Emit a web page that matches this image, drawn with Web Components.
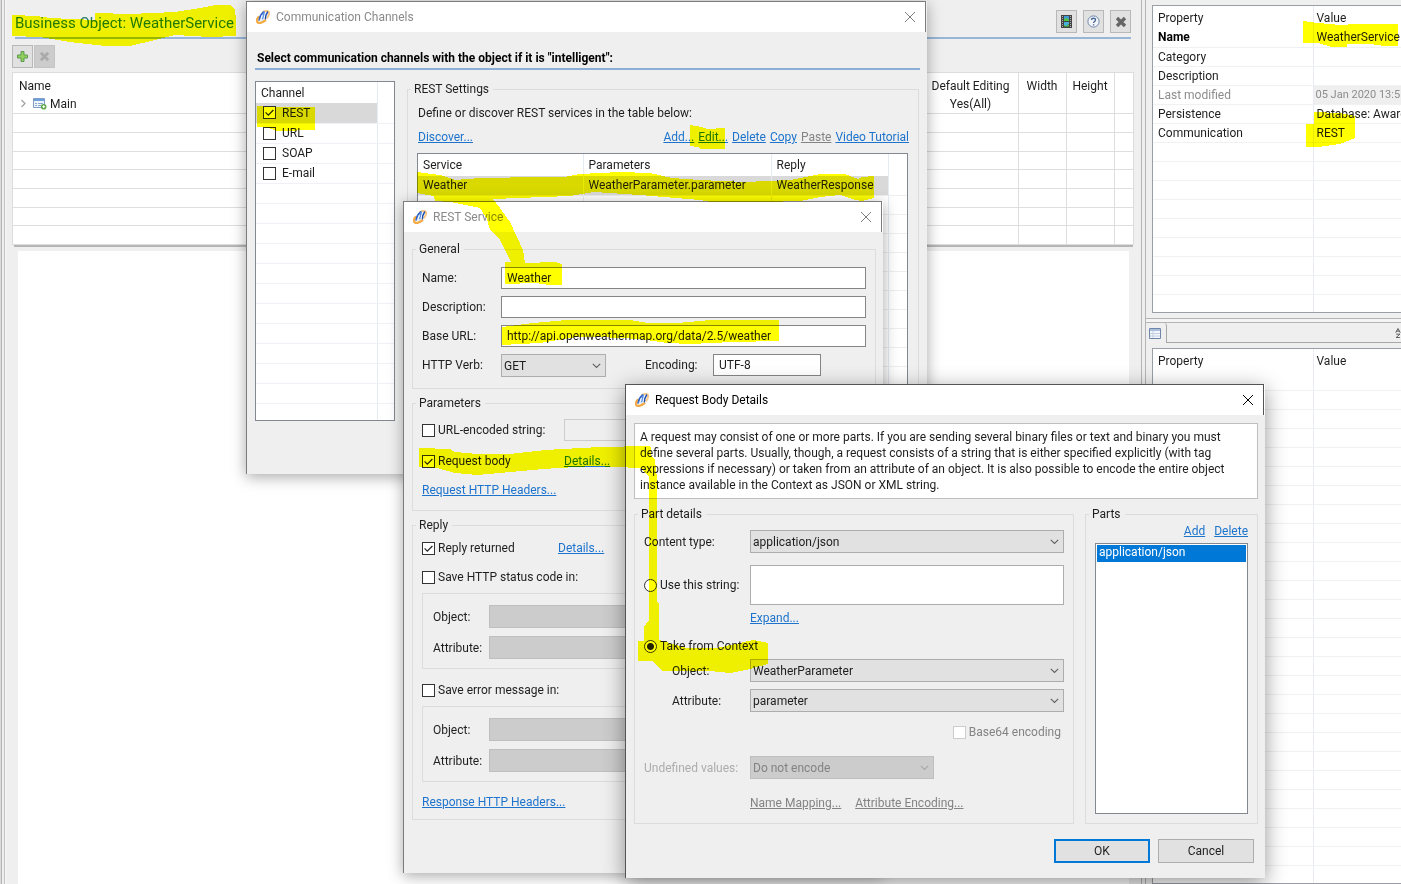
<!DOCTYPE html>
<html lang="en">
<head>
<meta charset="utf-8">
<title>Business Object: WeatherService</title>
<style>
  html, body { margin: 0; height: 100%; }
  body { font: 12px/16px Roboto, "Noto Sans", sans-serif; color: #1e1e1e; background: #efefef; overflow: hidden; }
</style>
</head>
<body>
<studio-desktop></studio-desktop>
<script>
const CHEVRON = `url("data:image/svg+xml,%3Csvg xmlns='http://www.w3.org/2000/svg' width='9' height='6'%3E%3Cpath d='M.8.8 4.5 4.5 8.2.8' fill='none' stroke='%23606060' stroke-width='1.1'/%3E%3C/svg%3E")`;
const CHEVRON_OFF = CHEVRON.replace('%23606060', '%23a8a8a8');
const TICK = `url("data:image/svg+xml,%3Csvg xmlns='http://www.w3.org/2000/svg' width='11' height='11'%3E%3Cpath d='M1.6 5.4 4.3 8.1 9.4 3' fill='none' stroke='%23222' stroke-width='1.2'/%3E%3C/svg%3E")`;

const BASE = `
  * { box-sizing: border-box; }
  :host { display: block; box-sizing: border-box; }
  a { color: #1e74cc; text-decoration: underline; }
  a.off { color: #838383; }
  input, select, textarea, button { font: inherit; color: inherit; margin: 0; border-radius: 0; }
  input[type=text], textarea { display: block; width: 100%; min-width: 0; height: 22px; padding: 0 5px; border: 1px solid #858585; background: #fff; outline: 0; resize: none; }
  input[type=text]:disabled { border-color: #ccc; background: #efefef; }
  select { display: block; appearance: none; width: 100%; min-width: 0; height: 23px; padding: 0 22px 0 2px; border: 1px solid #adadad;
    background: #e1e1e1 ${CHEVRON} no-repeat right 4px center; }
  select:disabled { background: #ccc ${CHEVRON_OFF} no-repeat right 4px center; border-color: #bfbfbf; color: #838383; opacity: 1; }
  input[type=checkbox], input[type=radio] { appearance: none; flex: none; width: 13px; height: 13px; border: 1px solid #333; background: #fff; }
  input[type=checkbox]:checked { background: #fff ${TICK} no-repeat center; }
  input[type=checkbox]:disabled { border-color: #ccc; }
  input[type=radio] { border-radius: 50%; }
  input[type=radio]:checked { background: radial-gradient(circle, #222 3px, #fff 4px); }
  .check { display: flex; align-items: center; gap: 3px; height: 20px; }
  table { border-collapse: collapse; table-layout: fixed; width: 100%; }
  th, td { font-weight: 400; text-align: left; padding: 0 5px; white-space: nowrap; overflow: hidden; }
`;

const define = (name, css, html) => customElements.define(name, class extends HTMLElement {
  constructor() {
    super();
    const t = document.createElement('template');
    t.innerHTML = `<style>${BASE}${css}</style>${typeof html === 'function' ? html(this) : html}`;
    this.attachShadow({ mode: 'open' }).append(t.content.cloneNode(true));
  }
});

const blankRows = (count, cells) => `<tr>${'<td></td>'.repeat(cells)}</tr>`.repeat(count);

/* Application mark used in every title bar */
define('app-mark', `:host { width: 14px; height: 14px; flex: none; } svg { display: block; }`, `
  <svg width="14" height="14" viewBox="0 0 14 14" fill="none" stroke-linecap="round" aria-hidden="true">
    <path d="M2.600 7C1 9 .6 11.300 1.700 12.400c1.600 1.200 5 .3 7.500-2" stroke="#f2ab45" stroke-width="2.400"/>
    <path d="M7 2C9.300.6 12 .6 12.800 1.800c.6 1.200 0 3.800-1.500 5.800" stroke="#f8c98a" stroke-width="2"/>
    <path d="M3.200 10.200C3.600 7 5 4 7.800 2" stroke="#2f62c4" stroke-width="1.700"/>
    <path d="M8.200 2.200 6.400 9.600" stroke="#5d93e6" stroke-width="1.600"/>
    <path d="M9.400 8.800C9.400 6.400 10.200 4 11.600 2" stroke="#1f4fae" stroke-width="1.500"/>
    <path d="M4 10.400 6.600 9.600M6 5.600v1.600" stroke="#e3edfb" stroke-width="1.100"/>
  </svg>`);

/* Window frame: title bar plus slotted body */
define('app-window', `
  :host { display: flex; flex-direction: column; color: #1e1e1e; box-shadow: 0 3px 14px rgba(0,0,0,.34); }
  :host([active]) { box-shadow: 0 5px 20px rgba(0,0,0,.42); }
  header { display: flex; align-items: center; gap: 6px; height: 31px; padding: 0 9px; margin-right: 1px;
    background: #fff; border: 1px solid #7c7c7c; border-bottom: 0; color: #8a8a8a; }
  :host([active]) header { color: #000; border-color: #555; }
  h2 { flex: 1; margin: 0; font: inherit; }
  button { width: 12px; height: 12px; padding: 0; border: 0; background: none; color: #7c7c7c; }
  :host([active]) button { color: #000; }
  svg { display: block; }
  .body { flex: 1; background: #efefef; border-left: 1px solid #7c7c7c; }
  :host([active]) .body { border-color: #555; }`,
  el => `<header><app-mark></app-mark><h2>${el.getAttribute('heading')}</h2>
    <button type="button" aria-label="Close"><svg width="12" height="12" viewBox="0 0 12 12"><path d="M1 1 11 11M11 1 1 11" stroke="currentColor" stroke-width="1"/></svg></button>
  </header><div class="body"><slot></slot></div>`);

/* Titled frame */
define('group-box', `
  fieldset { margin: 0; padding: 0 9px; min-width: 0; height: 100%; border: 1px solid #dcdcdc; }
  legend { padding: 0 4px 0 3px; margin-left: -6px; height: 16px; }`,
  el => `<fieldset>${el.hasAttribute('heading') ? `<legend>${el.getAttribute('heading')}</legend>` : ''}<slot></slot></fieldset>`);

define('tool-button', `
  :host { width: 21px; height: 23px; }
  button { display: grid; place-items: center; width: 100%; height: 100%; padding: 0; border: 1px solid #b8b8b8; background: #e1e1e1; }
  button:disabled { background: #ccc; border-color: #c4c4c4; }`,
  el => `<button type="button" aria-label="${el.getAttribute('label')}" ${el.hasAttribute('disabled') ? 'disabled' : ''}><slot></slot></button>`);

define('object-editor', `
  :host { display: flex; flex-direction: column; min-width: 0; background: #efefef; border-right: 1px solid #b4b4b4; }
  header { display: flex; align-items: center; justify-content: space-between; height: 37px; margin: 0 10px 0 8px; padding-top: 6px; }
  h1 { margin: 0; padding-top: 2px; font-size: 15px; font-weight: 400; line-height: 20px; color: #237a70; }
  .tools { display: flex; gap: 6px; }
  .rule { height: 2px; margin: 0 10px 0 8px; background: #97b6d8; }
  .bar { display: flex; gap: 1px; padding: 6px 0 4px 5px; }
  .list { height: 173px; margin: 0 7px 0 5px; background: #fff; border: 1px solid #dcdcdc; border-bottom: 0; }
  table { height: 100%; }
  td { border-bottom: 1px solid #dedede; }
  thead tr, .main { height: 19px; }
  tbody tr { height: 18px; }
  th { padding-top: 5px; }
  th:first-child { padding-left: 6px; }
  .c { text-align: center; border-left: 1px solid transparent; }
  .v { border-left: 1px solid #dedede; }
  .tree { display: flex; align-items: center; gap: 3px; }
  .split { height: 2px; margin: 0 8px 0 7px; background: #b6b6b6; }
  .canvas { flex: 1; margin: 4px 12px 0 11px; background: #fff; }
  svg { display: block; }`, `
  <header><h1>Business Object: WeatherService</h1>
    <div class="tools">
      <tool-button label="Video"><svg width="11" height="13" viewBox="0 0 11 13"><path d="M0 0h11v13H0z" fill="#444"/><path d="M3 1h5v5H3z" fill="#3f9ad8"/><path d="M3 4l3-1 2 2v1H3zM3 9l2-1 3 2v2H3z" fill="#50c83c"/><path d="M3 7h5v2l-3 2-2-1z" fill="#48b0dc"/><path d="M3 6.500h5M3 12h5" stroke="#444"/><path d="M1.500 1v12M9.500 1v12" stroke="#aaa" stroke-dasharray="1 1"/></svg></tool-button>
      <tool-button label="Help"><svg width="13" height="13" viewBox="0 0 13 13" fill="none"><circle cx="6.500" cy="6.500" r="5.600" fill="#f2f6fb" stroke="#6f86a8"/><path d="M4.500 5c.1-2.400 4-2.400 4 0 0 1.500-1.900 1.500-1.900 3M6.600 9.300v1.200" stroke="#4a6794" stroke-width="1.400"/></svg></tool-button>
      <tool-button label="Close"><svg width="12" height="12" viewBox="0 0 12 12"><path d="M2 2 10 10M10 2 2 10" stroke="#666" stroke-width="3.400"/></svg></tool-button>
    </div>
  </header>
  <div class="rule"></div>
  <div class="bar">
    <tool-button label="Add"><svg width="11" height="11" viewBox="0 0 11 11"><path d="M4 .5h3V4h3.500v3H7v3.500H4V7H.5V4H4z" fill="#8ed05a" stroke="#5f9a50"/></svg></tool-button>
    <tool-button label="Remove" disabled><svg width="11" height="11" viewBox="0 0 12 12"><path d="M2 2 10 10M10 2 2 10" stroke="#aaa" stroke-width="3.200"/></svg></tool-button>
  </div>
  <div class="list"><table>
    <colgroup><col><col style="width:95px"><col style="width:48px"><col style="width:48px"><col style="width:19px"></colgroup>
    <thead><tr><th>Name</th><th class="c">Default Editing</th><th class="c v">Width</th><th class="c v">Height</th><th class="v"></th></tr></thead>
    <tbody>
      <tr class="main"><td><span class="tree">
        <svg width="12" height="9" viewBox="0 0 12 9"><path d="M3.500 1 7 4.500 3.500 8" fill="none" stroke="#a0a0a0" stroke-width="1.200"/></svg>
        <svg width="14" height="12" viewBox="0 0 14 12"><path d="M.5.5h11v9H.5z" fill="#eef5fd" stroke="#7d9cc6"/><path d="M1 1h10v2H1z" fill="#6f9fdc"/><path d="M2 5.500h2M5 5.500h5M2 7.500h2M5 7.500h3" stroke="#8ba7cb"/><circle cx="10.700" cy="8.700" r="2.800" fill="#5da648"/><path d="M9.200 8.700h3M10.700 7.200v3" stroke="#fff"/></svg>Main</span></td>
        <td class="c">Yes(All)</td><td class="v"></td><td class="v"></td><td class="v"></td></tr>
      ${'<tr><td></td><td></td><td class="v"></td><td class="v"></td><td class="v"></td></tr>'.repeat(7)}
    </tbody></table></div>
  <div class="split"></div>
  <div class="canvas"></div>`);

define('property-table', `
  :host { background: #fff; border: 1px solid #9a9ea6; border-right: 0; overflow: hidden; }
  tr { height: 19px; }
  th, td { border-bottom: 1px solid #f0f1f3; line-height: 18px; }
  thead th { border-bottom: 0; height: 22px; padding-top: 2px; }
  th + th, td + td { border-left: 1px solid #e8ecf2; padding: 0 0 0 3px; }
  th + th { padding-top: 2px; }
  .b { font-weight: 700; color: #000; }
  .dim { color: #8c8c8c; }
  .dim + td { background: #efefef; color: #8c8c8c; padding-left: 2px; font-size: 11px; }`,
  el => `<table><colgroup><col style="width:160px"><col></colgroup>
    <thead><tr><th>Property</th><th>Value</th></tr></thead><tbody>${el.hasAttribute('filled') ? `
      <tr><td class="b">Name</td><td>WeatherService</td></tr>
      <tr><td>Category</td><td></td></tr>
      <tr><td>Description</td><td></td></tr>
      <tr><td class="dim">Last modified</td><td>05 Jan 2020 13:5</td></tr>
      <tr><td>Persistence</td><td>Database: Aware</td></tr>
      <tr><td>Communication</td><td>REST</td></tr>` : ''}${blankRows(el.hasAttribute('filled') ? 9 : 40, 2)}</tbody></table>`);

define('property-pane', `
  :host { display: flex; flex-direction: column; margin-left: 3px; border-left: 1px solid #b4b4b4; background: #efefef; overflow: hidden; }
  property-table { margin-left: 6px; }
  .top { height: 308px; margin-top: 5px; flex: none; }
  .line { flex: none; margin-top: 5px; border-top: 1px solid #b4b4b4; height: 4px; background: #f4f4f4; }
  .tabs { flex: none; display: flex; height: 21px; border-top: 1px solid #b4b4b4; }
  .tab { display: grid; place-items: center; width: 21px; border-right: 1px solid #a8a8a8; border-radius: 0 3px 0 0; padding-right: 2px; }
  .strip { flex: 1; display: flex; justify-content: flex-end; align-items: center; border-bottom: 1px solid #a8a8a8; overflow: hidden; }
  .bottom { flex: 1; margin-top: 5px; min-height: 0; }
  svg { display: block; flex: none; }`, `
  <property-table class="top" filled></property-table>
  <div class="line"></div>
  <div class="tabs"><div class="tab"><svg width="12" height="11" viewBox="0 0 12 11"><path d="M.5.5h11v10H.5z" fill="#f3f7fc" stroke="#6f86a8"/><path d="M1 1h10v2H1z" fill="#a9bfdc"/><path d="M1 5.500h10M1 8h10M4 3v7" stroke="#c3d0e2"/></svg></div>
    <div class="strip"><svg width="6" height="14" viewBox="0 0 8 14" fill="none" stroke="#333"><path d="M1 6.500 4 1 7 6.500M2 4.500h4M1.500 8.500h5L1.500 13h5"/></svg></div></div>
  <property-table class="bottom"></property-table>`);

define('channels-dialog', `
  h3 { margin: 0 7px 0 8px; padding: 18px 2px 2px; font-size: 12px; font-weight: 700; line-height: 16px; color: #000; border-bottom: 2px solid #8caed6; }
  .split { display: flex; gap: 12px; padding: 11px 8px 53px 8px; }
  .channels { flex: none; width: 140px; height: 340px; background: #fff; border: 1px solid #828790; overflow: hidden; }
  .channels tr { height: 20px; }
  .channels thead tr { height: 21px; }
  td { border-bottom: 1px solid #eef1f5; }
  th + th, td + td { border-left: 1px solid #e6ebf2; }
  .check { gap: 6px; height: 19px; padding-left: 2px; }
  .sel td:first-child { background: #d9d9d9; }
  group-box { flex: 1; height: 340px; }
  p { margin: 7px 0 0 1px; line-height: 18px; }
  .links { display: flex; gap: 4px; margin: 6px 0 7px 1px; line-height: 18px; }
  .links a:first-child { margin-right: auto; }
  .services { height: 240px; margin: 0 1px 0 0; background: #fff; border: 1px solid #828790; overflow: hidden; }
  .services tr { height: 19px; }
  .services thead tr { height: 22px; }
  .services .sel td:not(:last-child) { background: #d9d9d9; }
  .services td { border-bottom-color: #eee; }`, `
  <h3>Select communication channels with the object if it is "intelligent":</h3>
  <div class="split">
    <div class="channels"><table><colgroup><col style="width:121px"><col></colgroup>
      <thead><tr><th>Channel</th><th></th></tr></thead><tbody>
      ${['REST', 'URL', 'SOAP', 'E-mail'].map((n, i) => `<tr class="${i ? '' : 'sel'}"><td><label class="check"><input type="checkbox" ${i ? '' : 'checked'}>${n}</label></td><td></td></tr>`).join('')}
      ${blankRows(12, 2)}</tbody></table></div>
    <group-box heading="REST Settings">
      <p>Define or discover REST services in the table below:</p>
      <div class="links"><a href="#">Discover...</a><a href="#">Add...</a><a href="#">Edit...</a><a href="#">Delete</a><a href="#">Copy</a><a href="#" class="off">Paste</a><a href="#">Video Tutorial</a></div>
      <div class="services"><table><colgroup><col style="width:165px"><col style="width:188px"><col><col style="width:19px"></colgroup>
        <thead><tr><th>Service</th><th>Parameters</th><th>Reply</th><th></th></tr></thead>
        <tbody><tr class="sel"><td>Weather</td><td>WeatherParameter.parameter</td><td>WeatherResponse</td><td></td></tr>${blankRows(11, 4)}</tbody></table></div>
    </group-box>
  </div>`);

const target = id => `<group-box class="sub"><div class="pair"><label for="${id}o">Object:</label><select id="${id}o" disabled></select><label for="${id}a">Attribute:</label><select id="${id}a" disabled></select></div></group-box>`;

define('service-dialog', `
  :host { padding: 9px 7px 53px 8px; }
  group-box + group-box { margin-top: 6px; }
  .form { display: grid; grid-template-columns: 79px 1fr; gap: 7px 0; align-items: center; padding: 10px 0 12px; }
  .form > * { height: 22px; line-height: 22px; }
  .verb { display: grid; grid-template-columns: 105px 39px 68px 108px; line-height: 22px; }
  .verb select { height: 23px; }
  .verb label { grid-column: 3; }
  .params { display: grid; grid-template-columns: 142px 1fr; align-items: center; gap: 9px 0; padding: 8px 0 11px; }
  .params .check { height: 22px; }
  .reply { padding: 5px 0 8px; }
  .row { display: grid; grid-template-columns: 136px 1fr; align-items: center; }
  .links { line-height: 18px; }
  .wide { grid-column: 1 / -1; }
  .status { margin-top: 9px; }
  .sub { margin: 6px 0 11px; }
  .pair { display: grid; grid-template-columns: 56px 1fr; align-items: center; gap: 8px 0; padding: 11px 0 9px 1px; }
  .pair select { height: 23px; }`, `
  <group-box heading="General"><div class="form">
    <label for="n">Name:</label><input id="n" type="text" value="Weather">
    <label for="d">Description:</label><input id="d" type="text">
    <label for="u">Base URL:</label><input id="u" type="text" value="http://api.openweathermap.org/data/2.5/weather">
    <label for="v">HTTP Verb:</label><div class="verb"><select id="v"><option>GET</option></select><label for="e">Encoding:</label><input id="e" type="text" value="UTF-8"></div>
  </div></group-box>
  <group-box heading="Parameters"><div class="params">
    <label class="check"><input type="checkbox">URL-encoded string:</label><input type="text" aria-label="URL-encoded string" disabled>
    <label class="check"><input type="checkbox" checked>Request body</label><span><a href="#">Details...</a></span>
    <span class="wide links"><a href="#">Request HTTP Headers...</a></span>
  </div></group-box>
  <group-box heading="Reply"><div class="reply">
    <div class="row"><label class="check"><input type="checkbox" checked>Reply returned</label><span><a href="#">Details...</a></span></div>
    <label class="check status"><input type="checkbox">Save HTTP status code in:</label>
    ${target('s')}
    <label class="check"><input type="checkbox">Save error message in:</label>
    ${target('m')}
    <div class="links"><a href="#">Response HTTP Headers...</a></div>
  </div></group-box>`);

define('body-dialog', `
  :host { padding: 8px 7px 15px 8px; }
  p { margin: 0 0 7px; padding: 5px; background: #fff; border: 1px solid #bfbfbf; white-space: nowrap; }
  .groups { display: grid; grid-template-columns: 1fr 173px; gap: 11px; }
  .form { display: grid; grid-template-columns: 106px 1fr; padding: 8px 0 12px; align-items: center; }
  .indent { padding-left: 28px; }
  textarea { height: 40px; border-color: #adadad; }
  .r1 { margin-bottom: 12px; } .r2 { margin-bottom: 5px; } .r3 { grid-column: 2; margin-bottom: 10px; }
  .r4 { grid-column: 1 / -1; margin-bottom: 3px; } .r5 { margin-bottom: 7px; } .r6 { margin-bottom: 11px; }
  .r7 { grid-column: 1 / -1; justify-self: end; height: 18px; margin: 0 3px 15px 0; color: #838383; }
  .r8 { margin-bottom: 16px; } .r9 { grid-column: 2; display: flex; gap: 14px; }
  .undef { width: 184px; } .faint { color: #adadad; }
  .parts { padding: 1px 0 9px; }
  .plinks { display: flex; justify-content: flex-end; gap: 9px; margin-bottom: 4px; }
  select.list { height: 271px; padding: 1px; border: 1px solid #828790; background: #fff; outline: 0; overflow: hidden; }
  .list option { height: 17px; min-height: 0; padding: 0 2px; line-height: 17px; }
  .list option:checked { background: #0078d7 linear-gradient(#0078d7, #0078d7); color: #fff; -webkit-text-fill-color: #fff; }
  footer { display: flex; justify-content: flex-end; gap: 8px; margin-top: 15px; padding-right: 4px; }
  button { width: 96px; height: 24px; padding: 0; border: 1px solid #adadad; background: #e1e1e1; }
  button.ok { border: 2px solid #0078d7; }`, `
  <p>A request may consist of one or more parts. If you are sending several binary files or text and binary you must<br>define several parts. Usually, though, a request consists of a string that is either specified explicitly (with tag<br>expressions if necessary) or taken from an attribute of an object. It is also possible to encode the entire object<br>instance available in the Context as JSON or XML string.</p>
  <div class="groups">
    <group-box heading="Part details"><div class="form">
      <label class="r1" for="c">Content type:</label><select class="r1" id="c"><option>application/json</option></select>
      <label class="check r2"><input type="radio" name="src">Use this string:</label><textarea class="r2" aria-label="String"></textarea>
      <span class="r3"><a href="#">Expand...</a></span>
      <label class="check r4"><input type="radio" name="src" checked>Take from Context</label>
      <label class="r5 indent" for="o">Object:</label><select class="r5" id="o"><option>WeatherParameter</option></select>
      <label class="r6 indent" for="a">Attribute:</label><select class="r6" id="a"><option>parameter</option></select>
      <label class="check r7"><input type="checkbox" disabled>Base64 encoding</label>
      <label class="r8 faint" for="x">Undefined values:</label><select class="r8 undef" id="x" disabled><option>Do not encode</option></select>
      <span class="r9"><a href="#" class="off">Name Mapping...</a><a href="#" class="off">Attribute Encoding...</a></span>
    </div></group-box>
    <group-box heading="Parts"><div class="parts">
      <div class="plinks"><a href="#">Add</a><a href="#">Delete</a></div>
      <select class="list" size="12" aria-label="Parts"><option selected>application/json</option></select>
    </div></group-box>
  </div>
  <footer><button type="button" class="ok">OK</button><button type="button">Cancel</button></footer>`);

/* Yellow marker strokes laid over the windows */
define('marker-strokes', `
  :host { position: absolute; inset: 0; pointer-events: none; mix-blend-mode: multiply; }
  svg { display: block; }`, `
  <svg width="1401" height="884" viewBox="0 0 1401 884" fill="#ff0" shape-rendering="crispEdges" aria-hidden="true">
    <path d="M12 15 37 16 50 18 95 20V13L130 14 175 12 200 8 215 5H230L235 9 236 20V36L210 37 175 35 155 40 130 46H105L70 42 40 37 12 36Z"/>
    <path d="M257 106 268 107H315V130L278 131 265 127H257Z"/>
    <path d="M690 125 702 127 707 129 725 128V149H700L698 147 690 146Z"/>
    <path d="M417 172 440 175 455 180 480 178 540 177H564L580 174 620 172 650 173 672 178 700 180 745 182 790 180 805 177 820 174H845L858 179 862 177 874 176V198L862 201 855 200 840 195 820 197 800 201 765 202H710L700 200 640 195 594 192 570 196 493 199 500 208 510 222 517 237 523 250 525 263 555 262 562 264V285H550L535 283 505 284V262H511L505 250 500 240 490 230 487 219 480 208 470 206 450 202 435 201 434 196 417 193Z"/>
    <path d="M502 327 533 323 567 320H630L648 323H677L710 320H779V341L733 342 690 344 667 343 640 339 600 337H577L540 343 502 345Z"/>
    <path d="M419 448 450 449 455 452 478 454H510L545 450 600 447 648 446 651 447V456L655 460 657 478V602L659 604V640L687 648H717L740 643 753 640 768 643V664L750 669 730 673 710 671H663L652 661H638V641H644V627L649 620V477L640 468 593 466 543 469 510 472 477 475 455 473 437 468 419 467Z"/>
    <path d="M1303 21 1318 23 1340 25 1355 24H1398V46H1385L1370 44H1347V47H1332L1318 43H1303Z"/>
    <path d="M1314 112 1340 113 1355 116V138L1340 144 1318 147H1306V124H1314Z"/>
  </svg>`);

define('studio-desktop', `
  :host { position: relative; isolation: isolate; display: grid; grid-template-columns: 7px minmax(0, 1fr) 259px; height: 100vh; overflow: hidden; background: #efefef; }
  .edge { background: linear-gradient(90deg, #dcdcdc 1px, #b4b4b4 1px 2px, #efefef 2px 4px, #c4c4c4 4px 5px, #f4f4f4 5px); }
  app-window { position: absolute; }
  .channels { left: 246px; top: 1px; width: 681px; }
  .service { left: 403px; top: 201px; width: 480px; }
  .request { left: 625px; top: 384px; width: 640px; }`, `
  <div class="edge"></div>
  <object-editor></object-editor>
  <property-pane></property-pane>
  <app-window class="channels" heading="Communication Channels"><channels-dialog></channels-dialog></app-window>
  <app-window class="service" heading="REST Service"><service-dialog></service-dialog></app-window>
  <app-window class="request" heading="Request Body Details" active><body-dialog></body-dialog></app-window>
  <marker-strokes></marker-strokes>`);
</script>
</body>
</html>
